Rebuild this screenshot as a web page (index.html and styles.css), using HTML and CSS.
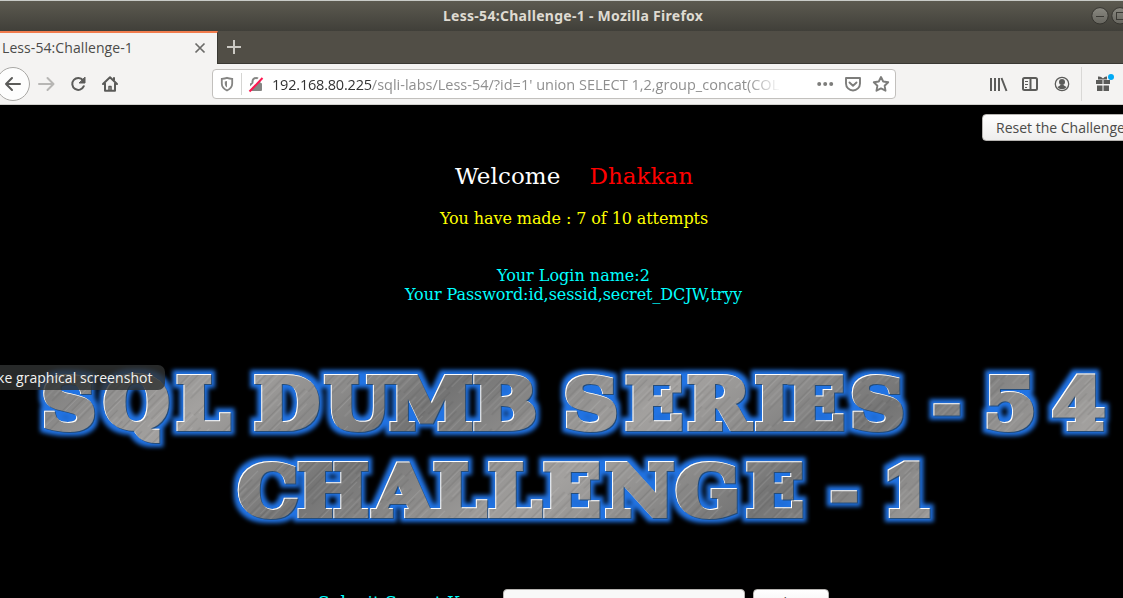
FILE: index.html
```html
<!DOCTYPE html>
<html lang="en">
<head>
<meta charset="utf-8">
<title>Less-54:Challenge-1</title>
<link rel="stylesheet" href="styles.css">
</head>
<body>
<header class="titlebar">
  <span class="window-title">Less-54:Challenge-1 - Mozilla Firefox</span>
  <svg class="window-buttons" width="33" height="30" viewBox="0 0 33 30">
    <defs><linearGradient id="btn" x2="0" y2="1"><stop stop-color="#8a8981"/><stop offset="1" stop-color="#66655e"/></linearGradient></defs>
    <g fill="url(#btn)" stroke="#35342f"><circle cx="10" cy="15.8" r="8.2"/><circle cx="30" cy="15.8" r="8.2"/></g>
    <g fill="none" stroke="#3a3934"><path d="M6 16.5h8"/><rect x="26.500" y="12.500" width="8" height="7"/></g>
  </svg>
</header>
<nav class="tabs">
  <div class="tab"><span class="tab-title">Less-54:Challenge-1</span>
    <svg width="12" height="12" viewBox="0 0 12 12"><path d="M1.500 1.500l9 9m0-9l-9 9" stroke="#6b6b69" stroke-width="1.700"/></svg>
  </div>
  <svg class="plus" width="14" height="14" viewBox="0 0 14 14"><path d="M7 0v14M0 7h14" stroke="#cbc9c3" stroke-width="2"/></svg>
</nav>
<div class="toolbar">
  <svg class="nav-icons" width="130" height="40" viewBox="0 0 130 40" fill="none" stroke="#5b5b59" stroke-width="2" stroke-linecap="round" stroke-linejoin="round">
    <circle cx="13" cy="20" r="16.500" fill="#fdfdfd" stroke="#a9a8a5" stroke-width="1"/>
    <path d="M20 20H6M12 14l-6 6 6 6"/>
    <path d="M39 20h14M47.500 14l6 6-6 6" stroke="#b7b6b4"/>
    <path d="M83 16.200a6 6 0 1 0 .8 6"/><path d="M85 13.500v5.500h-5.500z" fill="#5b5b59" stroke-width="1"/>
    <path d="M103 20l7-6.800 7 6.800M105 19.500v7.300h10v-7.300M114 14v2"/><path d="M109 26v-3.500h2V26" stroke-width="1.500"/>
  </svg>
  <div class="urlbar">
    <svg class="security" width="59" height="28" viewBox="0 0 59 28" fill="none">
      <path d="M14 7.800c2 .7 3.800.9 5.200 1v4.700c0 3.500-2 5.500-5.200 7-3.200-1.500-5.200-3.500-5.200-7V8.800c1.400-.1 3.200-.3 5.200-1z" stroke="#858583" stroke-width="1.800"/>
      <path d="M14 11v6.500c-1.500-1-2.200-2.200-2.200-4v-2z" fill="#858583"/>
      <path d="M28.500 3v22" stroke="#d5d5d3"/>
      <rect x="37" y="13" width="12" height="8" rx="1" fill="#858583"/>
      <path d="M39.500 13v-1.500a3.500 3.500 0 0 1 7 0V13" stroke="#858583" stroke-width="2"/>
      <path d="M35 20.500L48 7.500" stroke="#fff" stroke-width="3"/><path d="M36.500 21.500l13-13.500" stroke="#ff1650" stroke-width="2"/>
    </svg>
    <div class="url"><span class="host">192.168.80.225</span><span class="path">/sqli-labs/Less-54/?id=1' union SELECT 1,2,group_concat(COL</span></div>
    <svg class="page-actions" width="78" height="28" viewBox="0 0 78 28" fill="none" stroke="#7d7d7b" stroke-width="1.900" stroke-linejoin="round" stroke-linecap="round">
      <g fill="#7d7d7b" stroke="none"><circle cx="2.200" cy="14" r="2"/><circle cx="8.200" cy="14" r="2"/><circle cx="14.200" cy="14" r="2"/></g>
      <path d="M29 8h14v5.500a7 7 0 0 1-14 0zM32.500 12.500l3.500 3.300 3.500-3.300"/>
      <path d="M64 7l2.200 4.500 5 .7-3.600 3.500.9 5L64 18.400l-4.500 2.300.9-5-3.600-3.500 5-.7z"/>
    </svg>
  </div>
  <svg class="tools" width="136" height="40" viewBox="0 0 136 40" fill="none" stroke="#5b5b59" stroke-width="2">
    <path d="M4 14v13M8 14v13M12 14v13M14.500 14l5 13"/>
    <rect x="36" y="14" width="14" height="12" rx="1.500"/><path d="M43.500 14v12"/><path d="M38 17.500h3M38 20.500h3M38 23.500h2" stroke-width="1"/>
    <circle cx="75" cy="20" r="6.700" stroke-width="1.300"/><circle cx="75" cy="18" r="3" fill="#5b5b59" stroke="none"/><path d="M70.500 23q2-1 3-2h3q1 1 3 2c-2 3-7 3-9 0z" fill="#5b5b59" stroke="none"/>
    <path d="M94.500 3v34" stroke="#d9d8d6" stroke-width="1"/>
    <path d="M109 16h6.500v4H109zM116.500 16h6.500v4h-6.500zM110 21.500h5.500V27H110zM116.500 21.500h5.500V27h-5.500zM111 12.500q3-.5 5 2 2-2.500 4-2v3h-9z" fill="#5b5b59" stroke="none"/>
    <circle cx="124" cy="13" r="3" fill="#00aaf5" stroke="none"/>
  </svg>
</div>
<main class="page">
  <div class="reset-row"><div class="reset">Reset the Challenge</div></div>
  <div class="welcome"><span>Welcome</span><span class="name">Dhakkan</span></div>
  <div class="attempts">You have made : 7 of 10 attempts</div>
  <div class="result"><div class="login">Your Login name:2</div><div class="password">Your Password:id,sessid,secret_DCJW,tryy</div></div>
  <svg class="banner" width="1123" height="180" viewBox="0 355 1123 180">
    <defs>
      <linearGradient id="metal" gradientUnits="userSpaceOnUse" x1="40" y1="350" x2="125" y2="455" spreadMethod="reflect">
        <stop stop-color="#747474"/><stop offset=".55" stop-color="#8f8e8d"/><stop offset="1" stop-color="#a3a19f"/>
      </linearGradient>
      <pattern id="brushed" width="1123" height="600" patternUnits="userSpaceOnUse">
        <rect width="1123" height="600" fill="url(#metal)"/>
        <rect width="1123" height="600" fill="url(#scratches)"/>
      </pattern>
      <pattern id="scratches" width="31" height="90" patternUnits="userSpaceOnUse" patternTransform="rotate(43)">
        <path d="M1.500 0v30M5.500 20v50M11.500 0v40M14.500 35v50M20 10v28M23.500 50v35M28 25v50" stroke="#fff" stroke-opacity=".2" stroke-width=".6"/>
        <path d="M3.500 10v50M8.500 0v30M13 30v60M17 0v30M19 45v30M25.500 5v45M30 50v30" stroke="#222" stroke-opacity=".24" stroke-width=".6"/>
      </pattern>
      <filter id="bevel" filterUnits="userSpaceOnUse" x="0" y="350" width="1123" height="190" color-interpolation-filters="sRGB">
        <feMorphology in="SourceAlpha" operator="dilate" radius="4" result="fat"/>
        <feGaussianBlur in="fat" stdDeviation="2.100" result="soft"/>
        <feFlood flood-color="#2173e3"/><feComposite in2="soft" operator="in" result="glow"/>
        <feOffset in="SourceAlpha" dx="1" dy="1" result="shift"/>
        <feFlood flood-color="#fff"/><feComposite in2="SourceAlpha" operator="in"/><feComposite in2="shift" operator="out" result="edge"/>
        <feFlood flood-color="#244c7a"/><feComposite in2="shift" operator="in" result="shade"/>
        <feMerge><feMergeNode in="glow"/><feMergeNode in="shade"/><feMergeNode in="SourceGraphic"/><feMergeNode in="edge"/></feMerge>
      </filter>
    </defs>
    <g filter="url(#bevel)"><g class="banner-text" transform="scale(1.07 1)">
      <text y="428" x="38.900 96.800 164.800">SQL</text>
      <text y="428" x="237.300 303.200 364 442">DUMB</text>
      <text y="428" x="526.700 584.300 642.300 705.300 735.500 794.500">SERIES</text>
      <text y="428" x="870" class="dash">-</text>
      <text y="428" x="919.500 983.500">54</text>
      <text y="515" x="222.300 277.700 349.500 404.700 456 507.500 565.500 631.300 697.200">CHALLENGE</text>
      <text y="515" x="774" class="dash">-</text>
      <text y="515" x="824">1</text>
    </g></g>
  </svg>
  <div class="submit-row"><span class="key-label">Submit Secret Key:</span><div class="key-field"></div><div class="submit">submit</div></div>
</main>
<div class="tooltip"><span>ke graphical screenshot</span></div>
</body>
</html>
```
FILE: styles.css
```css
* { box-sizing: border-box; }
body { margin: 0; width: 1123px; height: 598px; overflow: hidden; display: flex; flex-direction: column; background: #000; font-family: "Open Sans", "Noto Sans", sans-serif; white-space: nowrap; }
svg { display: block; flex: none; }
.titlebar { flex: none; height: 31px; display: flex; justify-content: flex-end; border-top: 1px solid #c8cbc7; background: linear-gradient(#5c5a50, #403f39); }
.window-title { width: 265px; margin-right: 382px; font: bold 14px/29px "Noto Sans", sans-serif; color: #dfdbd2; letter-spacing: .28px; }
.window-buttons { margin-top: -1px; }
.tabs { flex: none; height: 33px; display: flex; background: #514e46; border-bottom: 1px solid #393833; }
.tab { width: 218px; height: 33px; display: flex; align-items: center; justify-content: space-between; padding: 0 11px 2px 2px; background: #f4f3f2; border-top: 2px solid #f17c4d; border-right: 1px solid #393833; font-size: 14px; color: #4b4b49; }
.tab-title { letter-spacing: .08px; }
.plus { margin: 9px 0 0 9px; }
.toolbar { flex: none; height: 41px; display: flex; align-items: center; background: #f4f3f2; border-bottom: 1px solid #d0cfcc; }
.nav-icons { margin-right: 82px; }
.urlbar { width: 684px; height: 30px; flex: none; display: flex; align-items: center; background: #fff; border: 1px solid #c2c0bd; border-radius: 4px; }
.url { width: 509px; margin-right: 36px; overflow: hidden; padding-top: 2px; font-size: 14.500px; line-height: 26px; color: #8f8f8f; -webkit-mask-image: linear-gradient(90deg, #000 475px, transparent 509px); mask-image: linear-gradient(90deg, #000 475px, transparent 509px); }
.host { color: #333; letter-spacing: -.2px; }
.path { letter-spacing: 0; }
.tools { margin-left: 91px; }
.page { flex: none; height: 493px; display: flex; flex-direction: column; background: #000; font-family: "DejaVu Serif", serif; }
.reset-row { flex: none; height: 56px; padding: 9px 0 0 982px; overflow: hidden; }
.reset { width: 160px; height: 27px; padding-left: 13px; border: 1px solid #b6b4b1; border-radius: 4px; background: linear-gradient(#fff, #eeedec); font: 14px/25px "Open Sans", sans-serif; color: #4b4b49; }
.welcome { display: flex; gap: 29px; height: 30px; padding-left: 455px; font-size: 23px; line-height: 30px; letter-spacing: .07px; color: #fff; }
.name { color: #f00; }
.attempts { height: 19px; margin: 18px 0 38px 440px; font-size: 16px; line-height: 19px; letter-spacing: -.09px; color: #ff0; }
.result { height: 38px; font-size: 16px; line-height: 19px; color: #0ff; }
.login { padding-left: 497px; }
.password { padding-left: 405px; letter-spacing: -.075px; }
.banner { margin-top: 51px; }
.banner-text { font: bold 70px "DejaVu Serif", serif; fill: url(#brushed); stroke: url(#brushed); stroke-width: 6; }
.dash { stroke-width: 3; }
.submit-row { display: flex; height: 30px; margin-top: 54px; padding-left: 318px; }
.key-label { width: 185px; padding-top: 2px; font-size: 17px; line-height: 22px; color: #0ff; }
.key-field { width: 242px; height: 27px; border: 1px solid #b6b4b1; border-radius: 4px; background: #f8f8f8; }
.submit { width: 76px; height: 27px; margin-left: 8px; border: 1px solid #b6b4b1; border-radius: 4px; background: linear-gradient(#fff, #eeedec); font: 14px/25px "Open Sans", sans-serif; color: #4b4b49; text-align: center; }
.tooltip { position: absolute; left: 0; top: 365px; width: 165px; height: 25px; overflow: hidden; border-radius: 0 7px 7px 0; background: rgba(48, 50, 50, .82); color: #f3f3f1; font-size: 14px; line-height: 25px; }
.tooltip span { margin-left: -3px; letter-spacing: .05px; }
```
